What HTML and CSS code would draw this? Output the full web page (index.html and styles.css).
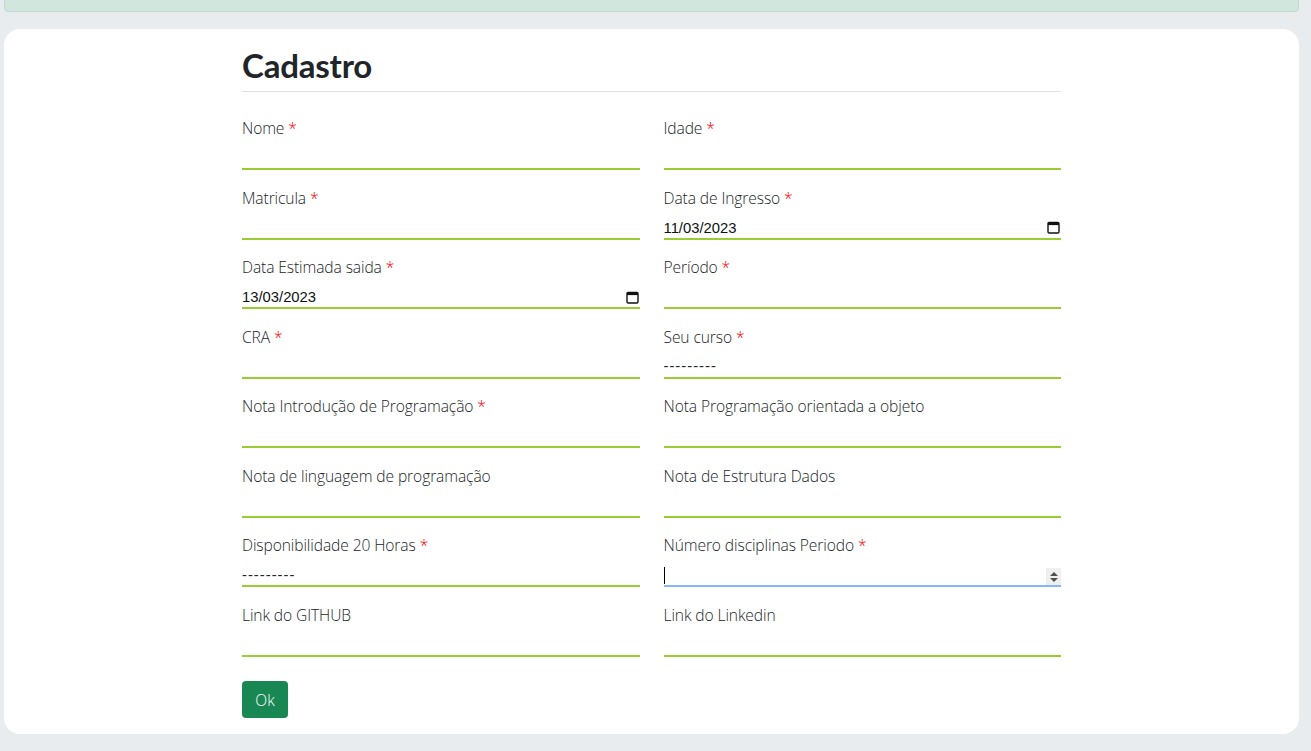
FILE: index.html
```html
<!DOCTYPE html>
<html lang="pt-br">
<head>
<meta charset="utf-8">
<title>Cadastro</title>
<link rel="stylesheet" href="styles.css">
</head>
<body>
<div class="alert"></div>
<main class="card">
  <div class="container">
    <h1 class="title">Cadastro</h1>
    <form class="form">
      <div class="grid">
        <div class="field">
          <label class="label">Nome <span class="req">*</span></label>
          <input class="input" type="text">
        </div>
        <div class="field">
          <label class="label">Idade <span class="req">*</span></label>
          <input class="input" type="text">
        </div>
        <div class="field">
          <label class="label">Matricula <span class="req">*</span></label>
          <input class="input" type="text">
        </div>
        <div class="field">
          <label class="label">Data de Ingresso <span class="req">*</span></label>
          <div class="input datebox">
            <input class="dateval" type="text" value="11/03/2023">
            <svg class="cal" width="13" height="13" viewBox="0 0 13 13"><rect x="1" y="1.5" width="11" height="10.5" rx="1.2" fill="none" stroke="#111" stroke-width="1.4"/><rect x="1" y="1.5" width="11" height="2.6" fill="#111"/></svg>
          </div>
        </div>
        <div class="field">
          <label class="label">Data Estimada saida <span class="req">*</span></label>
          <div class="input datebox">
            <input class="dateval" type="text" value="13/03/2023">
            <svg class="cal" width="13" height="13" viewBox="0 0 13 13"><rect x="1" y="1.5" width="11" height="10.5" rx="1.2" fill="none" stroke="#111" stroke-width="1.4"/><rect x="1" y="1.5" width="11" height="2.6" fill="#111"/></svg>
          </div>
        </div>
        <div class="field">
          <label class="label">Período <span class="req">*</span></label>
          <input class="input" type="text">
        </div>
        <div class="field">
          <label class="label">CRA <span class="req">*</span></label>
          <input class="input" type="text">
        </div>
        <div class="field">
          <label class="label">Seu curso <span class="req">*</span></label>
          <select class="input select"><option>---------</option></select>
        </div>
        <div class="field">
          <label class="label">Nota Introdução de Programação <span class="req">*</span></label>
          <input class="input" type="text">
        </div>
        <div class="field">
          <label class="label">Nota Programação orientada a objeto</label>
          <input class="input" type="text">
        </div>
        <div class="field">
          <label class="label">Nota de linguagem de programação</label>
          <input class="input" type="text">
        </div>
        <div class="field">
          <label class="label">Nota de Estrutura Dados</label>
          <input class="input" type="text">
        </div>
        <div class="field">
          <label class="label">Disponibilidade 20 Horas <span class="req">*</span></label>
          <select class="input select"><option>---------</option></select>
        </div>
        <div class="field">
          <label class="label">Número disciplinas Periodo <span class="req">*</span></label>
          <div class="numwrap">
            <input class="input number focused" type="text">
            <span class="caret"></span>
            <span class="spinner">
              <svg width="10" height="14" viewBox="0 0 10 14"><path d="M5 2 L9 6 H1 Z" fill="#505050"/><path d="M1 8 H9 L5 12 Z" fill="#505050"/></svg>
            </span>
          </div>
        </div>
        <div class="field">
          <label class="label">Link do GITHUB</label>
          <input class="input" type="text">
        </div>
        <div class="field">
          <label class="label">Link do Linkedin</label>
          <input class="input" type="text">
        </div>
      </div>
      <button class="btn" type="button">Ok</button>
    </form>
  </div>
</main>
</body>
</html>
```

FILE: styles.css
```css
* { box-sizing: border-box; }
html, body {
  margin: 0;
  padding: 0;
  background: #e9ecef;
  font-family: "Open Sans", "Liberation Sans", sans-serif;
  color: #212529;
}
body {
  padding: 0 12px 0 4px;
  height: 751px;
  overflow: hidden;
}
.alert {
  height: 13px;
  margin-top: -1px;
  background: #d1e7dd;
  border: 1px solid #badbcc;
  border-radius: 0 0 4px 4px;
}
.card {
  margin-top: 17px;
  background: #fff;
  border-radius: 16px;
  height: 705px;
  padding: 16px 0;
}
.container {
  width: 819px;
  margin: 0 auto;
}
.title {
  margin: 0;
  font-family: "Lato", "Open Sans", sans-serif;
  font-weight: 700;
  font-size: 33px;
  line-height: 40px;
  padding-bottom: 6px;
  border-bottom: 1px solid #dee2e6;
  letter-spacing: -0.2px;
}
.form {
  margin-top: 25px;
}
.grid {
  display: grid;
  grid-template-columns: 1fr 1fr;
  column-gap: 24px;
}
.field {
  height: 69.57px;
  display: flex;
  flex-direction: column;
}
.label {
  font-size: 15.6px;
  font-weight: 300;
  line-height: 23px;
  letter-spacing: -0.1px;
}
.req {
  color: #ff0000;
  font-weight: 300;
}
.input {
  display: block;
  width: 100%;
  height: 30px;
  border: 0;
  border-bottom: 2px solid #9acd32;
  padding: 0;
  margin: 0;
  background: transparent;
  font-family: "Liberation Sans", Arial, sans-serif;
  font-size: 14.8px;
  color: #212529;
  outline: none;
  border-radius: 0;
}
.datebox {
  display: flex;
  align-items: center;
  padding-top: 8px;
}
.dateval {
  flex: 1;
  border: 0;
  padding: 0;
  margin: 0;
  outline: none;
  background: transparent;
  font-family: "Liberation Sans", Arial, sans-serif;
  font-size: 14.8px;
  color: #111;
}
.cal {
  flex: none;
  margin-right: 1px;
}
.select {
  -webkit-appearance: none;
  appearance: none;
  padding-top: 7px;
  letter-spacing: 1px;
}
.numwrap {
  position: relative;
}
.focused {
  border-bottom-color: #86b7fe;
}
.caret {
  position: absolute;
  left: 0;
  top: 10px;
  width: 1px;
  height: 17px;
  background: #000;
}
.spinner {
  position: absolute;
  right: 0;
  top: 11px;
  width: 15px;
  height: 17px;
  background: #efefef;
  display: flex;
  align-items: center;
  justify-content: center;
}
.btn {
  margin-top: 7.5px;
  display: block;
  height: 37px;
  width: 46px;
  padding: 0;
  background: #198754;
  color: #fff;
  border: 0;
  border-radius: 4px;
  font-family: "Open Sans", sans-serif;
  font-weight: 300;
  font-size: 15.5px;
}
```
